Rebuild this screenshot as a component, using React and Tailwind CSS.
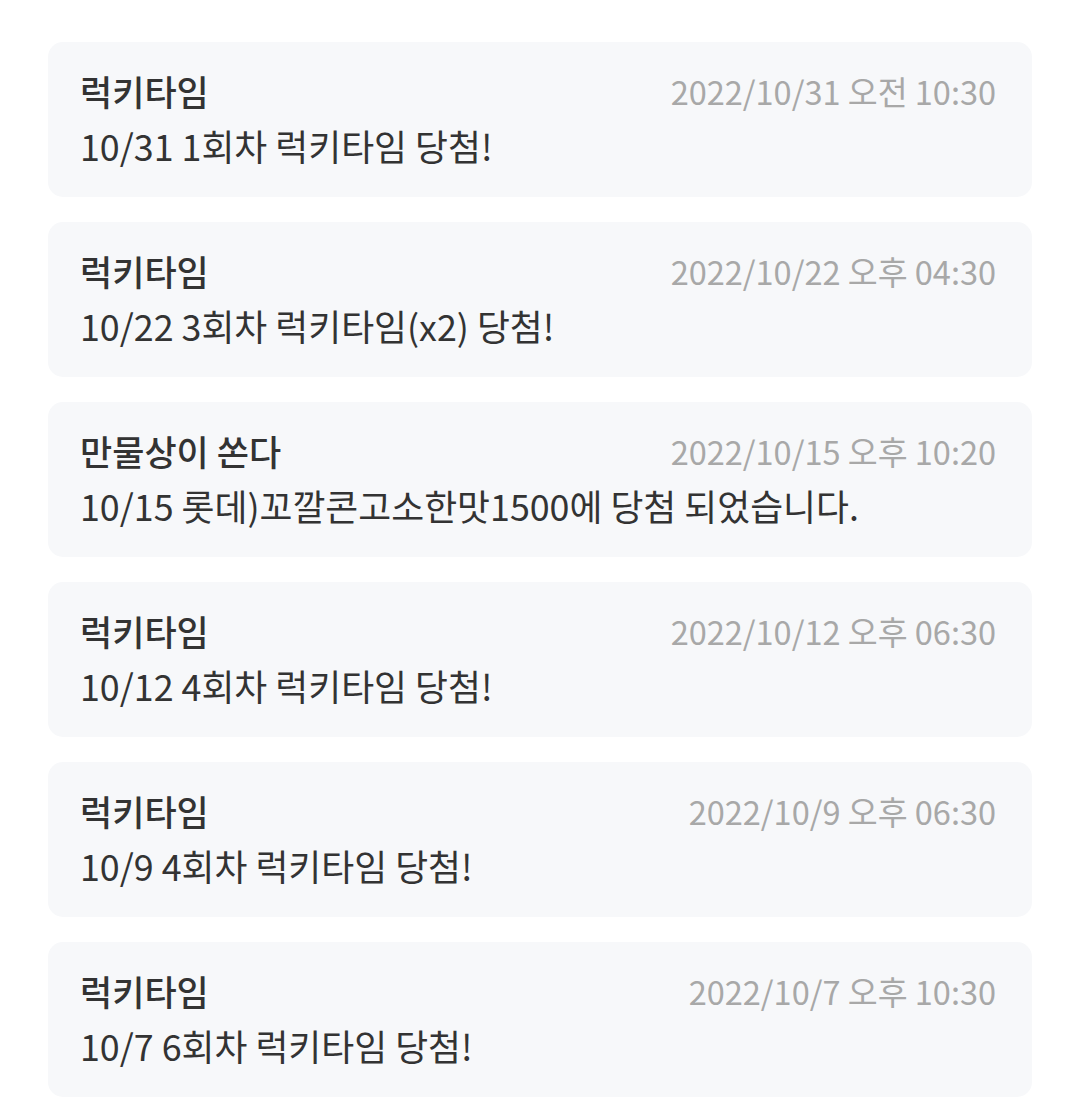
import React from 'react';

const notices = [
    { title: '럭키타임', date: '2022/10/31 오전 10:30', body: '10/31 1회차 럭키타임 당첨!' },
    { title: '럭키타임', date: '2022/10/22 오후 04:30', body: '10/22 3회차 럭키타임(x2) 당첨!' },
    { title: '만물상이 쏜다', date: '2022/10/15 오후 10:20', body: '10/15 롯데)꼬깔콘고소한맛1500에 당첨 되었습니다.' },
    { title: '럭키타임', date: '2022/10/12 오후 06:30', body: '10/12 4회차 럭키타임 당첨!' },
    { title: '럭키타임', date: '2022/10/9 오후 06:30', body: '10/9 4회차 럭키타임 당첨!' },
    { title: '럭키타임', date: '2022/10/7 오후 10:30', body: '10/7 6회차 럭키타임 당첨!' },
];

export default function App() {
    return (
        <div
            className="min-h-screen w-full bg-white px-12 pt-[42px] pb-4 flex flex-col gap-[25px]"
            style={{ fontFamily: '"Noto Sans CJK KR", "Noto Sans", sans-serif' }}
        >
            {notices.map((n, i) => (
                <div key={i} className="bg-[#f7f8fa] rounded-[15px] pl-8 pr-9 pt-[28px] pb-[31px]">
                    <div className="flex items-center justify-between h-[42px]">
                        <span className="text-[35px] font-medium text-[#333333] leading-[42px]">{n.title}</span>
                        <span className="text-[32.5px] text-[#a8a8a8] leading-[42px]">{n.date}</span>
                    </div>
                    <p className="mt-[12px] text-[35.8px] text-[#333333] leading-[42px]">{n.body}</p>
                </div>
            ))}
        </div>
    );
}
